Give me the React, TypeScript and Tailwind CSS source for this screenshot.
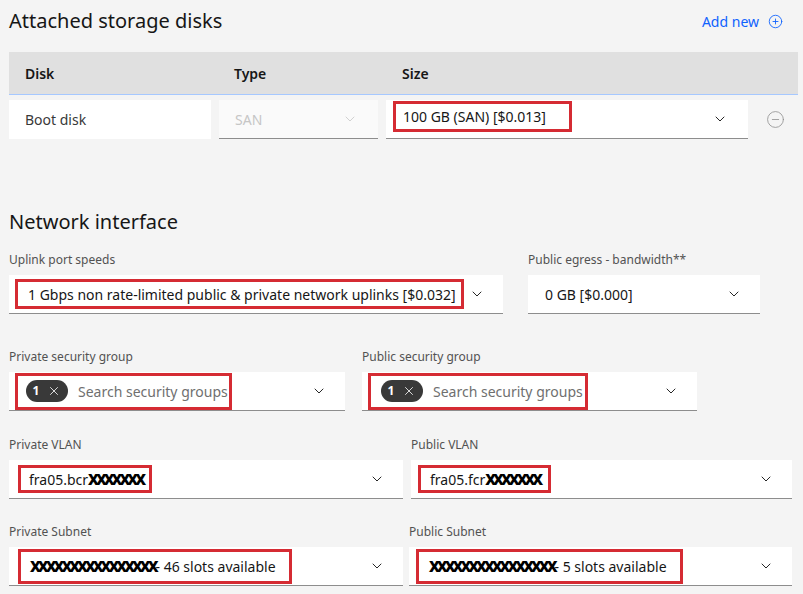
import React from 'react';
import { ChevronDown, CirclePlus, CircleMinus, X } from 'lucide-react';

const font = { fontFamily: '"Noto Sans", "Liberation Sans", sans-serif' };

const Marked = ({ children, className = '' }: { children: React.ReactNode; className?: string }) => (
  <span className={`inline-flex items-center border-[3px] border-[#d52b33] bg-white ${className}`}>{children}</span>
);

const Scribble = ({ n }: { n: number }) => (
  <span className="text-[15px] font-black tracking-[-3px] text-black">{'X'.repeat(n)}</span>
);

const Select = ({ width, children }: { width: string; children: React.ReactNode }) => (
  <div className={`flex h-[39px] ${width} items-center justify-between border-b border-[#8d8d8d] bg-white pl-[6px] pr-[18px]`}>
    <div className="flex items-center">{children}</div>
    <ChevronDown size={16} strokeWidth={1.4} className="text-[#161616]" />
  </div>
);

const Field = ({ label, width, children }: { label: string; width: string; children: React.ReactNode }) => (
  <div className="flex flex-col">
    <label className="mb-[7px] text-[12px] leading-[16px] text-[#525252]">{label}</label>
    <Select width={width}>{children}</Select>
  </div>
);

const Tag = () => (
  <span className="mr-[10px] inline-flex h-[22px] w-[42px] items-center justify-center gap-[8px] rounded-full bg-[#393939] text-[12px] font-bold text-white">
    1 <X size={14} strokeWidth={1.4} />
  </span>
);

export default function App() {
  return (
    <div className="min-h-screen w-[803px] bg-[#f4f4f4] text-[#161616]" style={font}>
      {/* storage */}
      <div className="flex h-[41px] items-center justify-between pl-[9px] pr-[20px] pt-[1px]">
        <h2 className="text-[20px] font-normal leading-none">Attached storage disks</h2>
        <button className="flex items-center gap-[9px] text-[14px] text-[#0f62fe]">
          Add new <CirclePlus size={15} strokeWidth={1.4} />
        </button>
      </div>
      <div className="ml-[9px] mr-[5px] mt-[11px] flex h-[43px] items-center border-b border-[#a6c8ff] bg-[#e0e0e0] text-[14px] font-semibold">
        <span className="w-[210px] pl-[16px]">Disk</span>
        <span className="w-[167px] pl-[15px]">Type</span>
        <span className="pl-[16px]">Size</span>
      </div>
      <div className="ml-[9px] mt-[5px] flex items-center gap-[8px] text-[14px]">
        <div className="flex h-[39px] w-[202px] items-center bg-white pl-[16px] text-[#393939]">Boot disk</div>
        <div className="flex h-[39px] w-[159px] items-center justify-between border-b border-[#8d8d8d] bg-[#fafafa] pl-[16px] pr-[20px] text-[#c6c6c6]">
          SAN <ChevronDown size={16} strokeWidth={1.2} />
        </div>
        <div className="flex h-[39px] w-[362px] items-center justify-between border-b border-[#8d8d8d] bg-white pl-[7px] pr-[20px]">
          <Marked className="mt-[1px] h-[31px] w-[179px] self-start pl-[7px]">100 GB (SAN) [$0.013]</Marked>
          <ChevronDown size={16} strokeWidth={1.4} />
        </div>
        <CircleMinus size={19} strokeWidth={1} className="ml-[10px] text-[#8d8d8d]" />
      </div>

      {/* network */}
      <h2 className="ml-[9px] mt-[73px] text-[20px] font-normal leading-none">Network interface</h2>
      <div className="ml-[9px] mt-[20px] flex flex-col text-[14px]">
        <div className="flex gap-[25px]">
          <Field label="Uplink port speeds" width="w-[494px]">
            <Marked className="h-[30px] w-[449px] pl-[10px]">1 Gbps non rate-limited public &amp; private network uplinks [$0.032]</Marked>
          </Field>
          <Field label="Public egress - bandwidth**" width="w-[232px]">
            <span className="pl-[11px]">0 GB [$0.000]</span>
          </Field>
        </div>
        <div className="mt-[35px] flex gap-[17px]">
          <Field label="Private security group" width="w-[336px]">
            <Marked className="h-[37px] w-[217px] pl-[8px]">
              <Tag />
              <span className="text-[#6f6f6f]">Search security groups</span>
            </Marked>
          </Field>
          <Field label="Public security group" width="w-[335px]">
            <Marked className="h-[37px] w-[220px] pl-[10px]">
              <Tag />
              <span className="text-[#6f6f6f]">Search security groups</span>
            </Marked>
          </Field>
        </div>
        <div className="mt-[26px] flex gap-[8px]">
          <Field label="Private VLAN" width="w-[394px]">
            <Marked className="ml-[3px] h-[28px] w-[134px] pl-[8px]">
              fra05.bcr<Scribble n={7} />
            </Marked>
          </Field>
          <Field label="Public VLAN" width="w-[381px]">
            <Marked className="ml-[1px] h-[28px] w-[133px] pl-[9px]">
              fra05.fcr<Scribble n={7} />
            </Marked>
          </Field>
        </div>
        <div className="mt-[25px] flex gap-[6px]">
          <Field label="Private Subnet" width="w-[394px]">
            <Marked className="ml-[3px] h-[35px] w-[274px] pl-[9px]">
              <Scribble n={16} />- 46 slots available
            </Marked>
          </Field>
          <Field label="Public Subnet" width="w-[383px]">
            <Marked className="ml-[1px] h-[35px] w-[267px] pl-[10px]">
              <Scribble n={16} />- 5 slots available
            </Marked>
          </Field>
        </div>
      </div>
    </div>
  );
}
